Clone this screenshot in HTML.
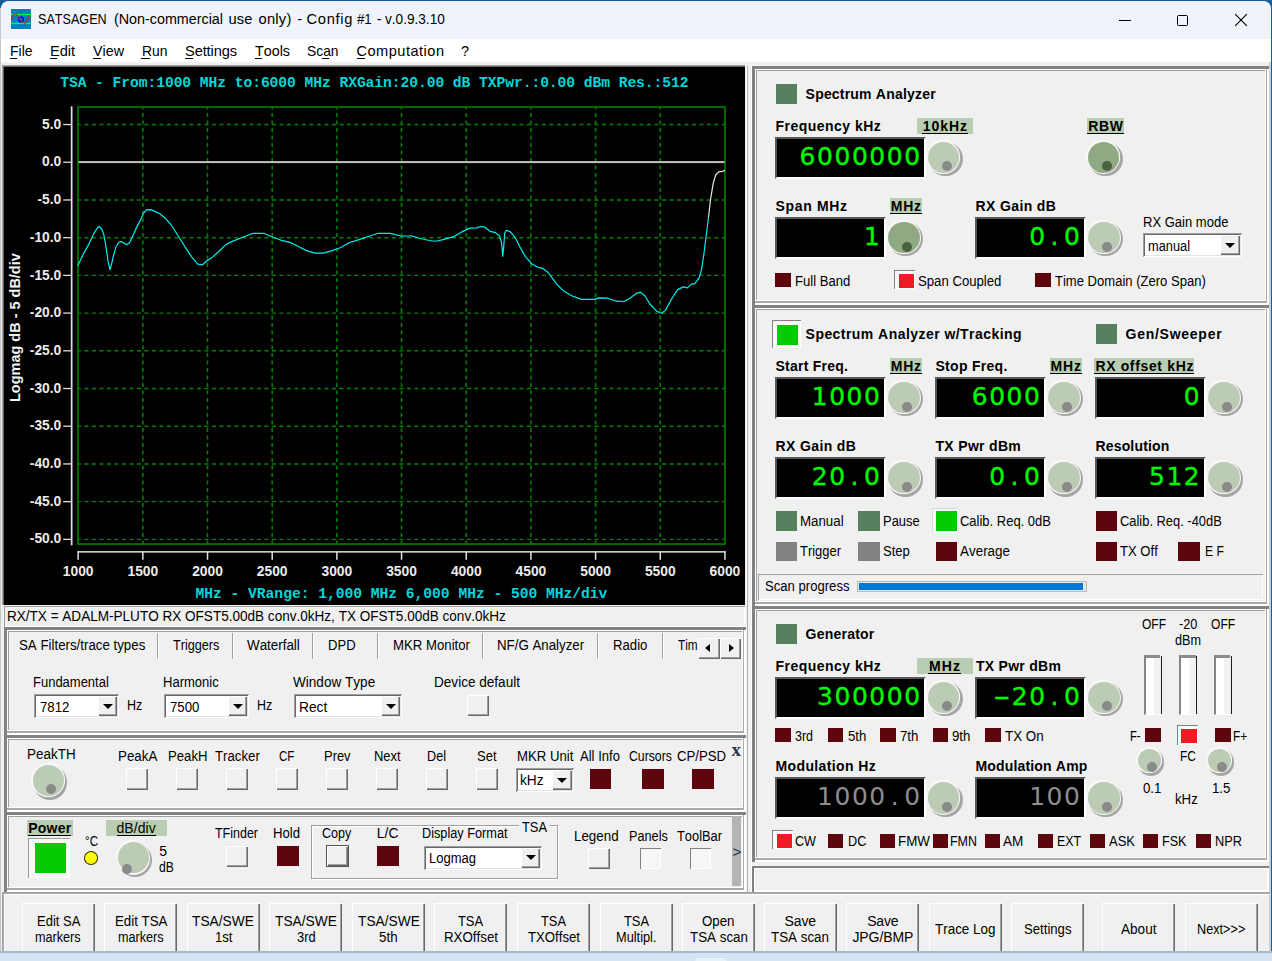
<!DOCTYPE html>
<html><head><meta charset="utf-8"><title>SATSAGEN</title>
<style>

html,body{margin:0;padding:0}
body{width:1272px;height:961px;overflow:hidden;position:relative;background:#1a5c98;font-family:"Liberation Sans",sans-serif;font-size:14px;font-kerning:none;color:#000}
div,span.t,svg{position:absolute;box-sizing:border-box}
span.t{white-space:pre;line-height:1}
.pn{background:#f0f0f0;box-shadow:inset 3px 3px #828282,inset -2px -2px #fff,inset -3px -4px #aaa,inset 4px 4px #fff,inset -4px -5px #fff,inset 5px 5px #a0a0a0}
.sk{background:#f0f0f0;box-shadow:inset 1px 1px #a0a0a0,inset -1px -1px #fff}
.lcd{background:#000;border:2px solid;border-color:#585858 #fff #fff #585858}
.dg{right:2.7px;top:5.6px;height:25px;line-height:25px;font-size:24.9px;font-family:'DejaVu Sans','Liberation Sans',sans-serif;white-space:nowrap;letter-spacing:1.609px;-webkit-text-stroke:0.35px currentColor}
.dg span{display:inline-block;width:17.45px;text-align:center;letter-spacing:0;margin-left:-0.8px;margin-right:0.8px}
.dg span.m{transform:translateY(-0.5px) scaleX(1.9)}
.bt{background:#f0f0f0;box-shadow:inset 1px 1px #fff,inset -1px -1px #696969,inset -2px -2px #a0a0a0}
.cb{background:#fff;box-shadow:inset 1px 1px #a0a0a0,inset -1px -1px #fff,inset 2px 2px #696969,inset -2px -2px #e3e3e3}
.ar{width:0;height:0;border-left:5px solid transparent;border-right:5px solid transparent;border-top:5.5px solid #000}
.dn{background:#f8f8f8;box-shadow:inset 1px 1px #808080,inset -1px -1px #fff}
.c{border-radius:50%}
.hl{background:#b9cdb2}

</style></head>
<body>
<div style="left:0px;top:8px;width:1px;height:944px;background:#c4c8cc"></div>
<div style="left:1px;top:1px;width:1270px;height:951px;background:#f0f0f0;border-radius:8px 8px 0 0"></div>
<div style="left:1px;top:1px;width:1270px;height:38px;background:#eff4fa;border-radius:8px 8px 0 0"></div>
<div style="left:1269px;top:39px;width:2px;height:913px;background:#d2cfcb"></div>
<svg style="left:10px;top:8px" width="22" height="22" viewBox="-1 -1 22 22"><rect x="-1" y="-1" width="22" height="22" fill="#fbfcfe"/><rect width="20" height="20" fill="#0080c0"/><rect y="4.9" width="20" height="1.3" fill="#00f848"/><rect y="13.7" width="20" height="1.4" fill="#00f848"/><circle cx="9.9" cy="10.4" r="2.3" fill="none" stroke="#0010f0" stroke-width="1.7"/><polyline points="0.5,10 2.2,5.8 5.3,5.4 6.9,7.5 9.4,10.5 10.7,12.9 12.6,13 14.3,14.6 15.6,12 16.7,9.7 18,7.9 19.6,9.4" fill="none" stroke="#f01010" stroke-width="1.3" stroke-dasharray="1.6 0.7"/></svg>
<span class="t" style="font-size:14.7px;left:38.1px;top:12.16px;transform-origin:0 0;transform:scaleX(0.8587);">SATSAGEN</span>
<span class="t" style="font-size:14.7px;left:113.5px;top:12.16px;transform-origin:0 0;transform:scaleX(0.9748);">(Non-commercial</span>
<span class="t" style="font-size:14.7px;letter-spacing:0.056px;left:228.6px;top:12.16px;">use</span>
<span class="t" style="font-size:14.7px;letter-spacing:0.214px;left:258.6px;top:12.16px;">only)</span>
<span class="t" style="font-size:14.7px;left:297.2px;top:12.16px;">-</span>
<span class="t" style="font-size:14.7px;letter-spacing:0.666px;left:306.6px;top:12.16px;">Config</span>
<span class="t" style="font-size:14.7px;left:357.3px;top:12.16px;transform-origin:0 0;transform:scaleX(0.8994);">#1</span>
<span class="t" style="font-size:14.7px;left:376.7px;top:12.16px;">-</span>
<span class="t" style="font-size:14.7px;left:385.2px;top:12.16px;transform-origin:0 0;transform:scaleX(0.9269);">v.0.9.3.10</span>
<div style="left:1118.5px;top:19.5px;width:12.5px;height:1.2px;background:#000"></div>
<div style="left:1176.5px;top:14.5px;width:11px;height:11px;border:1.2px solid #000;border-radius:1.5px"></div>
<svg style="left:1234px;top:13px" width="14" height="14" viewBox="0 0 14 14"><path d="M1.2 1.2L12.8 12.8M12.8 1.2L1.2 12.8" stroke="#000" stroke-width="1.15" fill="none"/></svg>
<div style="left:1px;top:39px;width:1270px;height:23px;background:#fff"></div>
<span class="t" style="font-size:14.6px;left:10px;top:43.94px;transform-origin:0 0;transform:scaleX(0.9568);">File</span>
<span class="t" style="font-size:14.6px;letter-spacing:-0.052px;left:50px;top:43.94px;">Edit</span>
<span class="t" style="font-size:14.6px;left:92.5px;top:43.94px;transform-origin:0 0;transform:scaleX(0.9798);">View</span>
<span class="t" style="font-size:14.6px;left:141.5px;top:43.94px;transform-origin:0 0;transform:scaleX(0.9522);">Run</span>
<span class="t" style="font-size:14.6px;letter-spacing:-0.105px;left:185px;top:43.94px;">Settings</span>
<span class="t" style="font-size:14.6px;left:255px;top:43.94px;transform-origin:0 0;transform:scaleX(0.9807);">Tools</span>
<span class="t" style="font-size:14.6px;left:307px;top:43.94px;transform-origin:0 0;transform:scaleX(0.9469);">Scan</span>
<span class="t" style="font-size:14.6px;letter-spacing:0.475px;left:356.5px;top:43.94px;">Computation</span>
<span class="t" style="font-size:14.6px;left:461px;top:43.94px;">?</span>
<div style="left:10px;top:57.6px;width:6.6px;height:1px;background:#000"></div>
<div style="left:50px;top:57.6px;width:6.8px;height:1px;background:#000"></div>
<div style="left:92.5px;top:57.6px;width:8.2px;height:1px;background:#000"></div>
<div style="left:141.4px;top:57.6px;width:8.4px;height:1px;background:#000"></div>
<div style="left:185px;top:57.6px;width:7.6px;height:1px;background:#000"></div>
<div style="left:255px;top:57.6px;width:7.2px;height:1px;background:#000"></div>
<div style="left:321.6px;top:57.6px;width:7px;height:1px;background:#000"></div>
<div style="left:356.6px;top:57.6px;width:8.6px;height:1px;background:#000"></div>
<div style="left:2px;top:65px;width:745px;height:540px;background:#000;box-shadow:inset 1px 1px #a0a0a0,inset 2px 2px #696969"></div>
<div style="left:745px;top:65px;width:7px;height:828px;background:#f0f0f0"></div>
<div style="left:745.5px;top:66px;width:1.5px;height:540px;background:#fff"></div>
<div style="left:747px;top:66px;width:1px;height:826px;background:#b4b4b4"></div>
<div style="left:751px;top:65px;width:1px;height:826px;background:#fff"></div>
<svg style="left:0;top:0" width="1272" height="961" viewBox="0 0 1272 961">
<line x1="76.9" y1="124.55" x2="725" y2="124.55" stroke="#008200" stroke-width="1.4" stroke-dasharray="4.1 3.4"/>
<line x1="76.9" y1="199.97" x2="725" y2="199.97" stroke="#008200" stroke-width="1.4" stroke-dasharray="4.1 3.4"/>
<line x1="76.9" y1="237.68" x2="725" y2="237.68" stroke="#008200" stroke-width="1.4" stroke-dasharray="4.1 3.4"/>
<line x1="76.9" y1="275.39" x2="725" y2="275.39" stroke="#008200" stroke-width="1.4" stroke-dasharray="4.1 3.4"/>
<line x1="76.9" y1="313.10" x2="725" y2="313.10" stroke="#008200" stroke-width="1.4" stroke-dasharray="4.1 3.4"/>
<line x1="76.9" y1="350.81" x2="725" y2="350.81" stroke="#008200" stroke-width="1.4" stroke-dasharray="4.1 3.4"/>
<line x1="76.9" y1="388.52" x2="725" y2="388.52" stroke="#008200" stroke-width="1.4" stroke-dasharray="4.1 3.4"/>
<line x1="76.9" y1="426.23" x2="725" y2="426.23" stroke="#008200" stroke-width="1.4" stroke-dasharray="4.1 3.4"/>
<line x1="76.9" y1="463.94" x2="725" y2="463.94" stroke="#008200" stroke-width="1.4" stroke-dasharray="4.1 3.4"/>
<line x1="76.9" y1="501.65" x2="725" y2="501.65" stroke="#008200" stroke-width="1.4" stroke-dasharray="4.1 3.4"/>
<line x1="76.9" y1="539.36" x2="725" y2="539.36" stroke="#008200" stroke-width="1.4" stroke-dasharray="4.1 3.4"/>
<line x1="142.83" y1="107" x2="142.83" y2="544" stroke="#008200" stroke-width="1.55" stroke-dasharray="4.1 3.4" stroke-dashoffset="1.5"/>
<line x1="207.51" y1="107" x2="207.51" y2="544" stroke="#008200" stroke-width="1.55" stroke-dasharray="4.1 3.4" stroke-dashoffset="1.5"/>
<line x1="272.19" y1="107" x2="272.19" y2="544" stroke="#008200" stroke-width="1.55" stroke-dasharray="4.1 3.4" stroke-dashoffset="1.5"/>
<line x1="336.87" y1="107" x2="336.87" y2="544" stroke="#008200" stroke-width="1.55" stroke-dasharray="4.1 3.4" stroke-dashoffset="1.5"/>
<line x1="401.55" y1="107" x2="401.55" y2="544" stroke="#008200" stroke-width="1.55" stroke-dasharray="4.1 3.4" stroke-dashoffset="1.5"/>
<line x1="466.23" y1="107" x2="466.23" y2="544" stroke="#008200" stroke-width="1.55" stroke-dasharray="4.1 3.4" stroke-dashoffset="1.5"/>
<line x1="530.91" y1="107" x2="530.91" y2="544" stroke="#008200" stroke-width="1.55" stroke-dasharray="4.1 3.4" stroke-dashoffset="1.5"/>
<line x1="595.59" y1="107" x2="595.59" y2="544" stroke="#008200" stroke-width="1.55" stroke-dasharray="4.1 3.4" stroke-dashoffset="1.5"/>
<line x1="660.27" y1="107" x2="660.27" y2="544" stroke="#008200" stroke-width="1.55" stroke-dasharray="4.1 3.4" stroke-dashoffset="1.5"/>
<rect x="77.95" y="107.05" width="647" height="437" fill="none" stroke="#007200" stroke-width="1.8"/>
<rect x="78.5" y="161.1" width="646" height="2" fill="#c4c4c4"/>
<rect x="70.8" y="106.3" width="1.7" height="439" fill="#e0e0e0"/>
<rect x="63.2" y="123.90" width="8" height="1.3" fill="#e0e0e0"/>
<rect x="63.2" y="161.61" width="8" height="1.3" fill="#e0e0e0"/>
<rect x="63.2" y="199.32" width="8" height="1.3" fill="#e0e0e0"/>
<rect x="63.2" y="237.03" width="8" height="1.3" fill="#e0e0e0"/>
<rect x="63.2" y="274.74" width="8" height="1.3" fill="#e0e0e0"/>
<rect x="63.2" y="312.45" width="8" height="1.3" fill="#e0e0e0"/>
<rect x="63.2" y="350.16" width="8" height="1.3" fill="#e0e0e0"/>
<rect x="63.2" y="387.87" width="8" height="1.3" fill="#e0e0e0"/>
<rect x="63.2" y="425.58" width="8" height="1.3" fill="#e0e0e0"/>
<rect x="63.2" y="463.29" width="8" height="1.3" fill="#e0e0e0"/>
<rect x="63.2" y="501.00" width="8" height="1.3" fill="#e0e0e0"/>
<rect x="63.2" y="538.71" width="8" height="1.3" fill="#e0e0e0"/>
<rect x="77.6" y="551.1" width="648" height="1.5" fill="#e0e0e0"/>
<rect x="77.40" y="551.1" width="1.5" height="8.7" fill="#e0e0e0"/>
<rect x="142.08" y="551.1" width="1.5" height="8.7" fill="#e0e0e0"/>
<rect x="206.76" y="551.1" width="1.5" height="8.7" fill="#e0e0e0"/>
<rect x="271.44" y="551.1" width="1.5" height="8.7" fill="#e0e0e0"/>
<rect x="336.12" y="551.1" width="1.5" height="8.7" fill="#e0e0e0"/>
<rect x="400.80" y="551.1" width="1.5" height="8.7" fill="#e0e0e0"/>
<rect x="465.48" y="551.1" width="1.5" height="8.7" fill="#e0e0e0"/>
<rect x="530.16" y="551.1" width="1.5" height="8.7" fill="#e0e0e0"/>
<rect x="594.84" y="551.1" width="1.5" height="8.7" fill="#e0e0e0"/>
<rect x="659.52" y="551.1" width="1.5" height="8.7" fill="#e0e0e0"/>
<rect x="724.20" y="551.1" width="1.5" height="8.7" fill="#e0e0e0"/>
<polyline points="77.8,265.7 83.5,253.6 88.9,244.1 94.3,232.6 97.0,228.5 99.1,226.5 101.8,229.2 103.8,234.6 105.8,245.5 107.9,260.3 109.9,269.5 111.2,265.7 113.3,256.3 116.0,246.8 118.7,242.5 121.4,241.4 124.1,243.4 126.8,244.8 129.5,242.7 132.2,237.3 136.3,227.9 140.3,220.4 143.7,213.0 146.4,209.9 151.1,209.6 155.2,211.6 159.9,213.7 164.7,217.7 171.4,225.2 178.2,236.0 185.0,246.8 191.7,256.9 197.8,264.1 202.5,264.7 207.7,260.3 212.0,257.6 218.8,251.5 225.5,244.8 232.3,241.4 240.8,238.0 253.0,233.3 263.8,233.3 271.5,236.7 281.4,240.3 290.9,242.7 300.3,247.5 307.1,250.9 315.2,253.2 323.3,253.2 331.4,250.9 340.9,247.5 349.0,242.7 359.8,239.4 370.7,235.7 378.1,233.3 390.3,233.3 400.8,236.0 411.6,236.0 422.5,239.0 431.9,241.0 437.3,241.0 444.1,239.4 453.6,236.7 461.7,231.9 469.8,228.1 476.6,227.9 480.6,226.5 484.7,227.2 490.1,231.3 495.5,232.6 499.5,236.0 501.6,242.7 502.7,256.3 503.6,248.2 504.7,233.3 506.3,230.3 510.4,231.9 515.1,237.3 519.8,246.8 525.2,256.3 532.0,264.1 537.4,267.1 542.8,268.4 548.2,272.5 553.6,279.9 556.7,284.1 563.3,290.7 571.6,295.7 581.6,299.4 595.0,299.4 598.3,297.9 607.5,298.2 616.6,301.2 624.1,301.5 629.9,298.2 636.6,293.2 640.8,292.4 644.9,295.7 649.9,304.0 656.6,311.2 661.6,313.2 665.7,309.9 671.6,299.0 677.4,289.9 683.2,286.9 687.4,287.9 691.5,284.1 694.9,283.6 699.0,278.2 701.5,269.9 704.0,253.3 706.5,233.3 708.5,217.5" fill="none" stroke="#00eef0" stroke-width="1.2" stroke-linejoin="round"/>
<polyline points="708.5,217.5 710.7,198.3 713.2,183.3 715.7,175.0 719.0,171.7 723.2,171.3 724.9,170.3" fill="none" stroke="#e6e6e6" stroke-width="1.2" stroke-linejoin="round"/>
</svg>
<span class="t" style="font-size:13.8px;font-weight:bold;color:#ececec;left:42.1125px;top:117.67px;">5.0</span>
<span class="t" style="font-size:13.8px;font-weight:bold;color:#ececec;left:42.1125px;top:155.38px;">0.0</span>
<span class="t" style="font-size:13.8px;font-weight:bold;color:#ececec;left:37.5187px;top:193.09px;">-5.0</span>
<span class="t" style="font-size:13.8px;font-weight:bold;color:#ececec;left:29.8469px;top:230.80px;">-10.0</span>
<span class="t" style="font-size:13.8px;font-weight:bold;color:#ececec;left:29.8469px;top:268.51px;">-15.0</span>
<span class="t" style="font-size:13.8px;font-weight:bold;color:#ececec;left:29.8469px;top:306.22px;">-20.0</span>
<span class="t" style="font-size:13.8px;font-weight:bold;color:#ececec;left:29.8469px;top:343.93px;">-25.0</span>
<span class="t" style="font-size:13.8px;font-weight:bold;color:#ececec;left:29.8469px;top:381.64px;">-30.0</span>
<span class="t" style="font-size:13.8px;font-weight:bold;color:#ececec;left:29.8469px;top:419.35px;">-35.0</span>
<span class="t" style="font-size:13.8px;font-weight:bold;color:#ececec;left:29.8469px;top:457.06px;">-40.0</span>
<span class="t" style="font-size:13.8px;font-weight:bold;color:#ececec;left:29.8469px;top:494.77px;">-45.0</span>
<span class="t" style="font-size:13.8px;font-weight:bold;color:#ececec;left:29.8469px;top:532.48px;">-50.0</span>
<span class="t" style="font-size:13.8px;font-weight:bold;color:#ececec;left:62.7984px;top:565.12px;">1000</span>
<span class="t" style="font-size:13.8px;font-weight:bold;color:#ececec;left:127.478px;top:565.12px;">1500</span>
<span class="t" style="font-size:13.8px;font-weight:bold;color:#ececec;left:192.158px;top:565.12px;">2000</span>
<span class="t" style="font-size:13.8px;font-weight:bold;color:#ececec;left:256.838px;top:565.12px;">2500</span>
<span class="t" style="font-size:13.8px;font-weight:bold;color:#ececec;left:321.518px;top:565.12px;">3000</span>
<span class="t" style="font-size:13.8px;font-weight:bold;color:#ececec;left:386.198px;top:565.12px;">3500</span>
<span class="t" style="font-size:13.8px;font-weight:bold;color:#ececec;left:450.878px;top:565.12px;">4000</span>
<span class="t" style="font-size:13.8px;font-weight:bold;color:#ececec;left:515.558px;top:565.12px;">4500</span>
<span class="t" style="font-size:13.8px;font-weight:bold;color:#ececec;left:580.238px;top:565.12px;">5000</span>
<span class="t" style="font-size:13.8px;font-weight:bold;color:#ececec;left:644.918px;top:565.12px;">5500</span>
<span class="t" style="font-size:13.8px;font-weight:bold;color:#ececec;left:709.598px;top:565.12px;">6000</span>
<span class="t" style="font-family:'Liberation Mono',monospace;font-size:14.67px;font-weight:bold;color:#00d6da;letter-spacing:-0.069px;left:60.2px;top:75.75px;">TSA - From:1000 MHz to:6000 MHz RXGain:20.00 dB TXPwr.:0.00 dBm Res.:512</span>
<span class="t" style="font-family:'Liberation Mono',monospace;font-size:14.67px;font-weight:bold;color:#00d6da;letter-spacing:-0.032px;left:195.5px;top:586.55px;">MHz - VRange: 1,000 MHz 6,000 MHz - 500 MHz/div</span>
<span class="t" style="font-size:14.5px;font-weight:bold;color:#f4f4f4;letter-spacing:-0.012px;left:8.43px;top:401.6px;transform-origin:0 0;transform:rotate(-90deg);">Logmag dB - 5 dB/div</span>
<div class="sk" style="left:4px;top:606px;width:741px;height:21px;"></div>
<span class="t" style="font-size:14px;left:7.2px;top:609.25px;transform-origin:0 0;transform:scaleX(0.9677);">RX/TX = ADALM-PLUTO RX OFST5.00dB conv.0kHz, TX OFST5.00dB conv.0kHz</span>
<div class="pn" style="left:4px;top:627px;width:742px;height:108px;"></div>
<span class="t" style="font-size:14px;left:18.8px;top:637.85px;transform-origin:0 0;transform:scaleX(0.9493);">SA Filters/trace types</span>
<span class="t" style="font-size:14px;left:173.3px;top:637.85px;transform-origin:0 0;transform:scaleX(0.9034);">Triggers</span>
<span class="t" style="font-size:14px;left:247.2px;top:637.85px;transform-origin:0 0;transform:scaleX(0.9559);">Waterfall</span>
<span class="t" style="font-size:14px;left:327.7px;top:637.85px;transform-origin:0 0;transform:scaleX(0.9336);">DPD</span>
<span class="t" style="font-size:14px;left:392.7px;top:637.85px;transform-origin:0 0;transform:scaleX(0.9426);">MKR Monitor</span>
<span class="t" style="font-size:14px;left:497.3px;top:637.85px;transform-origin:0 0;transform:scaleX(0.9487);">NF/G Analyzer</span>
<span class="t" style="font-size:14px;left:612.8px;top:637.85px;transform-origin:0 0;transform:scaleX(0.9401);">Radio</span>
<span class="t" style="font-size:14px;left:678.2px;top:637.85px;transform-origin:0 0;transform:scaleX(0.8445);">Tim</span>
<div style="left:157px;top:633px;width:1px;height:25.5px;background:#a0a0a0"></div>
<div style="left:158px;top:633px;width:1px;height:25.5px;background:#fff"></div>
<div style="left:232px;top:633px;width:1px;height:25.5px;background:#a0a0a0"></div>
<div style="left:233px;top:633px;width:1px;height:25.5px;background:#fff"></div>
<div style="left:312px;top:633px;width:1px;height:25.5px;background:#a0a0a0"></div>
<div style="left:313px;top:633px;width:1px;height:25.5px;background:#fff"></div>
<div style="left:377px;top:633px;width:1px;height:25.5px;background:#a0a0a0"></div>
<div style="left:378px;top:633px;width:1px;height:25.5px;background:#fff"></div>
<div style="left:482px;top:633px;width:1px;height:25.5px;background:#a0a0a0"></div>
<div style="left:483px;top:633px;width:1px;height:25.5px;background:#fff"></div>
<div style="left:597px;top:633px;width:1px;height:25.5px;background:#a0a0a0"></div>
<div style="left:598px;top:633px;width:1px;height:25.5px;background:#fff"></div>
<div style="left:662px;top:633px;width:1px;height:25.5px;background:#a0a0a0"></div>
<div style="left:663px;top:633px;width:1px;height:25.5px;background:#fff"></div>
<div class="bt" style="left:698px;top:638px;width:21.5px;height:20.5px;"></div>
<div class="bt" style="left:719.5px;top:638px;width:21.5px;height:20.5px;"></div>
<div style="left:704.5px;top:643.7px;width:0px;height:0px;border-top:4.5px solid transparent;border-bottom:4.5px solid transparent;border-right:5px solid #000"></div>
<div style="left:728.5px;top:643.7px;width:0px;height:0px;border-top:4.5px solid transparent;border-bottom:4.5px solid transparent;border-left:5px solid #000"></div>
<span class="t" style="font-size:14px;left:33.1px;top:675.35px;transform-origin:0 0;transform:scaleX(0.9276);">Fundamental</span>
<div class="cb" style="left:33.5px;top:694px;width:85.6px;height:24px;"></div>
<div class="bt" style="left:97.6px;top:696px;width:19.5px;height:20px;"></div>
<div class="ar" style="left:102.5px;top:703.6px;width:0px;height:0px;"></div>
<span class="t" style="font-size:14px;left:39.6px;top:700.25px;transform-origin:0 0;transform:scaleX(0.9436);">7812</span>
<span class="t" style="font-size:14px;left:126.8px;top:697.55px;transform-origin:0 0;transform:scaleX(0.8934);">Hz</span>
<span class="t" style="font-size:14px;left:163px;top:675.35px;transform-origin:0 0;transform:scaleX(0.9298);">Harmonic</span>
<div class="cb" style="left:163.5px;top:694px;width:85.6px;height:24px;"></div>
<div class="bt" style="left:227.6px;top:696px;width:19.5px;height:20px;"></div>
<div class="ar" style="left:232.5px;top:703.6px;width:0px;height:0px;"></div>
<span class="t" style="font-size:14px;left:169.6px;top:700.25px;transform-origin:0 0;transform:scaleX(0.9436);">7500</span>
<span class="t" style="font-size:14px;left:257px;top:697.55px;transform-origin:0 0;transform:scaleX(0.8876);">Hz</span>
<span class="t" style="font-size:14px;left:292.5px;top:675.35px;transform-origin:0 0;transform:scaleX(0.9692);">Window Type</span>
<div class="cb" style="left:293.5px;top:694px;width:108.8px;height:24px;"></div>
<div class="bt" style="left:380.8px;top:696px;width:19.5px;height:20px;"></div>
<div class="ar" style="left:385.7px;top:703.6px;width:0px;height:0px;"></div>
<span class="t" style="font-size:14px;left:299px;top:700.25px;transform-origin:0 0;transform:scaleX(0.9827);">Rect</span>
<span class="t" style="font-size:14px;left:434px;top:675.35px;transform-origin:0 0;transform:scaleX(0.9694);">Device default</span>
<div class="bt" style="left:466.5px;top:694.5px;width:22px;height:21.5px;"></div>
<div class="pn" style="left:4px;top:735px;width:742px;height:77px;"></div>
<span class="t" style="font-size:14px;left:26.6px;top:746.75px;transform-origin:0 0;transform:scaleX(0.9609);">PeakTH</span>
<div style="left:32.8px;top:765.2px;width:34.4px;height:34.4px;border-radius:50%;background:#a6a6a6"></div>
<div style="left:30.8px;top:763px;width:33.8px;height:33.8px;border-radius:50%;background:#fafafa"></div>
<div style="left:31.7px;top:763.9px;width:33.4px;height:33.4px;border-radius:50%;background:#f6f6f6"></div>
<div style="left:32.8px;top:765px;width:31.2px;height:31.2px;border-radius:50%;background:#bccbb4"></div>
<div style="left:46.2px;top:783.9px;width:10px;height:10px;border-radius:50%;background:#8a8a8a"></div>
<span class="t" style="font-size:14px;left:118px;top:748.75px;transform-origin:0 0;transform:scaleX(0.9552);">PeakA</span>
<span class="t" style="font-size:14px;left:168px;top:748.75px;transform-origin:0 0;transform:scaleX(0.9398);">PeakH</span>
<span class="t" style="font-size:14px;left:214.6px;top:748.75px;transform-origin:0 0;transform:scaleX(0.9441);">Tracker</span>
<span class="t" style="font-size:14px;left:278.6px;top:748.75px;transform-origin:0 0;transform:scaleX(0.8248);">CF</span>
<span class="t" style="font-size:14px;left:324px;top:748.75px;transform-origin:0 0;transform:scaleX(0.9237);">Prev</span>
<span class="t" style="font-size:14px;left:374.3px;top:748.75px;transform-origin:0 0;transform:scaleX(0.9237);">Next</span>
<span class="t" style="font-size:14px;left:426.8px;top:748.75px;transform-origin:0 0;transform:scaleX(0.9041);">Del</span>
<span class="t" style="font-size:14px;left:476.5px;top:748.75px;transform-origin:0 0;transform:scaleX(0.9279);">Set</span>
<span class="t" style="font-size:14px;left:516.8px;top:748.75px;transform-origin:0 0;transform:scaleX(0.9415);">MKR Unit</span>
<span class="t" style="font-size:14px;left:579.7px;top:748.75px;transform-origin:0 0;transform:scaleX(0.932);">All Info</span>
<span class="t" style="font-size:14px;left:628.8px;top:748.75px;transform-origin:0 0;transform:scaleX(0.8752);">Cursors</span>
<span class="t" style="font-size:14px;left:676.8px;top:748.75px;transform-origin:0 0;transform:scaleX(0.942);">CP/PSD</span>
<div class="bt" style="left:126px;top:768px;width:22.3px;height:21.6px;"></div>
<div class="bt" style="left:176px;top:768px;width:22.3px;height:21.6px;"></div>
<div class="bt" style="left:226px;top:768px;width:22.3px;height:21.6px;"></div>
<div class="bt" style="left:276px;top:768px;width:22.3px;height:21.6px;"></div>
<div class="bt" style="left:326px;top:768px;width:22.3px;height:21.6px;"></div>
<div class="bt" style="left:376px;top:768px;width:22.3px;height:21.6px;"></div>
<div class="bt" style="left:426px;top:768px;width:22.3px;height:21.6px;"></div>
<div class="bt" style="left:476px;top:768px;width:22.3px;height:21.6px;"></div>
<div class="cb" style="left:516.4px;top:768px;width:57.2px;height:23.8px;"></div>
<div class="bt" style="left:552.1px;top:770px;width:19.5px;height:19.8px;"></div>
<div class="ar" style="left:557px;top:777.5px;width:0px;height:0px;"></div>
<span class="t" style="font-size:14px;left:520.4px;top:773.05px;transform-origin:0 0;transform:scaleX(0.9782);">kHz</span>
<div style="left:589.6px;top:768.6px;width:21.6px;height:20.4px;background:#5e060d"></div>
<div style="left:642.1px;top:768.6px;width:21.6px;height:20.4px;background:#5e060d"></div>
<div style="left:692.1px;top:768.6px;width:21.6px;height:20.4px;background:#5e060d"></div>
<span class="t" style="font-family:'Liberation Mono',monospace;font-size:19px;font-weight:bold;color:#2a3254;left:731.6px;top:739.73px;font-family:'Liberation Serif',serif;">x</span>
<div class="pn" style="left:4px;top:812px;width:742px;height:80px;"></div>
<div class="hl" style="left:26.6px;top:820px;width:46.6px;height:16px;"></div>
<span class="t" style="font-size:14px;font-weight:bold;letter-spacing:0.221px;left:28.2px;top:821.05px;">Power</span><div style="left:28.2px;top:834.9px;width:42.9px;height:1px;background:#000"></div>
<div style="left:27.6px;top:838px;width:42px;height:39.5px;background:#f8f8f8;box-shadow:inset 1px 1px #9a9a9a,inset -1px -1px #fff"></div>
<div style="left:34.8px;top:843.3px;width:31px;height:29.4px;background:#02cb02"></div>
<span class="t" style="font-size:14px;left:84.6px;top:833.95px;transform-origin:0 0;transform:scaleX(0.8334);">°C</span>
<div style="left:83.6px;top:850.6px;width:14.6px;height:14.2px;border-radius:50%;background:#303000"></div>
<div style="left:84.8px;top:851.8px;width:12.2px;height:11.8px;border-radius:50%;background:#ffff00"></div>
<div class="hl" style="left:105.9px;top:820px;width:61.3px;height:16px;"></div>
<span class="t" style="font-size:14px;letter-spacing:0.076px;left:116.5px;top:821.05px;">dB/div</span><div style="left:116.5px;top:834.9px;width:39.3px;height:1px;background:#000"></div>
<div style="left:117.7px;top:842.5px;width:34.4px;height:34.4px;border-radius:50%;background:#a6a6a6"></div>
<div style="left:115.7px;top:840.3px;width:33.8px;height:33.8px;border-radius:50%;background:#fafafa"></div>
<div style="left:116.6px;top:841.2px;width:33.4px;height:33.4px;border-radius:50%;background:#f6f6f6"></div>
<div style="left:117.7px;top:842.3px;width:31.2px;height:31.2px;border-radius:50%;background:#bccbb4"></div>
<div style="left:121.7px;top:864px;width:10px;height:10px;border-radius:50%;background:#8a8a8a"></div>
<span class="t" style="font-size:14px;left:159.3px;top:844.15px;">5</span>
<span class="t" style="font-size:14px;left:159px;top:860.15px;transform-origin:0 0;transform:scaleX(0.8642);">dB</span>
<span class="t" style="font-size:14px;left:215px;top:826.25px;transform-origin:0 0;transform:scaleX(0.8915);">TFinder</span>
<div class="bt" style="left:226px;top:845.7px;width:22.3px;height:21.6px;"></div>
<span class="t" style="font-size:14px;left:272.9px;top:826.25px;transform-origin:0 0;transform:scaleX(0.9411);">Hold</span>
<div style="left:277.1px;top:846.3px;width:21.6px;height:20px;background:#5e060d"></div>
<div style="left:311px;top:825px;width:247px;height:53.5px;border:1px solid #a0a0a0;box-shadow:inset 1px 1px #fff,1px 1px #fff"></div>
<span class="t" style="font-size:14px;left:321.5px;top:826.25px;transform-origin:0 0;transform:scaleX(0.8964);">Copy</span>
<div style="left:325.6px;top:845px;width:23px;height:22.4px;background:#f0f0f0;border:1px solid #555;box-shadow:inset 1px 1px #fff,inset -1px -1px #696969,inset -2px -2px #a0a0a0"></div>
<span class="t" style="font-size:14px;letter-spacing:0.052px;left:376.7px;top:826.25px;">L/C</span>
<div style="left:377.1px;top:846.3px;width:21.6px;height:20px;background:#5e060d"></div>
<span class="t" style="font-size:14px;left:421.7px;top:826.25px;transform-origin:0 0;transform:scaleX(0.9082);">Display Format</span>
<div class="cb" style="left:423.8px;top:845.7px;width:118.4px;height:24.2px;"></div>
<div class="bt" style="left:520.7px;top:847.7px;width:19.5px;height:20.2px;"></div>
<div class="ar" style="left:525.6px;top:855.4px;width:0px;height:0px;"></div>
<span class="t" style="font-size:14px;left:428.9px;top:851.25px;transform-origin:0 0;transform:scaleX(0.929);">Logmag</span>
<div style="left:519px;top:819px;width:31px;height:14px;background:#f0f0f0"></div>
<span class="t" style="font-size:14px;left:522px;top:819.65px;transform-origin:0 0;transform:scaleX(0.918);">TSA</span>
<span class="t" style="font-size:14px;left:574px;top:828.85px;transform-origin:0 0;transform:scaleX(0.9546);">Legend</span>
<div class="bt" style="left:587.5px;top:847.7px;width:22.3px;height:21.6px;"></div>
<span class="t" style="font-size:14px;left:629.2px;top:828.85px;transform-origin:0 0;transform:scaleX(0.9063);">Panels</span>
<div style="left:639.6px;top:847.7px;width:21.6px;height:21.6px;background:#f6f6f6;box-shadow:inset 1px 1px #808080,inset -1px -1px #fff"></div>
<span class="t" style="font-size:14px;left:677.2px;top:828.85px;transform-origin:0 0;transform:scaleX(0.9178);">ToolBar</span>
<div style="left:689.7px;top:847.7px;width:21.6px;height:21.6px;background:#f6f6f6;box-shadow:inset 1px 1px #808080,inset -1px -1px #fff"></div>
<div style="left:732px;top:816.4px;width:9px;height:70px;background:#b4b4b4"></div>
<span class="t" style="font-size:15.5px;color:#20305a;left:732.4px;top:844.48px;">&gt;</span>
<div class="pn" style="left:752px;top:66px;width:517px;height:239px;"></div>
<div style="left:776px;top:84px;width:21px;height:20px;background:#56805e"></div>
<span class="t" style="font-size:14px;font-weight:bold;letter-spacing:0.198px;left:805.6px;top:86.95px;">Spectrum Analyzer</span>
<span class="t" style="font-size:14px;font-weight:bold;letter-spacing:0.476px;left:775.5px;top:119.15px;">Frequency kHz</span>
<div class="hl" style="left:917px;top:118px;width:56px;height:16px;"></div>
<span class="t" style="font-size:14px;font-weight:bold;letter-spacing:0.958px;left:922.7px;top:118.95px;">10kHz</span>
<div style="left:921.7px;top:133px;width:46.3px;height:1px;background:#000"></div>
<div class="lcd" style="left:774.8px;top:136.6px;width:151.6px;height:42px;"><div class="dg" style="color:#00fa00">6000000</div></div>
<div style="left:928.2px;top:142px;width:34.4px;height:34.4px;border-radius:50%;background:#a6a6a6"></div>
<div style="left:926.2px;top:139.8px;width:33.8px;height:33.8px;border-radius:50%;background:#fafafa"></div>
<div style="left:927.1px;top:140.7px;width:33.4px;height:33.4px;border-radius:50%;background:#f6f6f6"></div>
<div style="left:928.2px;top:141.8px;width:31.2px;height:31.2px;border-radius:50%;background:#bccbb4"></div>
<div style="left:942px;top:161.4px;width:10px;height:10px;border-radius:50%;background:#8a8a8a"></div>
<div class="hl" style="left:1087px;top:118px;width:37px;height:16px;"></div>
<span class="t" style="font-size:14px;font-weight:bold;letter-spacing:0.681px;left:1088.2px;top:118.95px;">RBW</span>
<div style="left:1087.2px;top:133px;width:36.8px;height:1px;background:#000"></div>
<div style="left:1088.2px;top:141.9px;width:34.4px;height:34.4px;border-radius:50%;background:#a6a6a6"></div>
<div style="left:1086.2px;top:139.7px;width:33.8px;height:33.8px;border-radius:50%;background:#fafafa"></div>
<div style="left:1087.1px;top:140.6px;width:33.4px;height:33.4px;border-radius:50%;background:#f6f6f6"></div>
<div style="left:1088.2px;top:141.7px;width:31.2px;height:31.2px;border-radius:50%;background:#8faa82"></div>
<div style="left:1102px;top:161.3px;width:10px;height:10px;border-radius:50%;background:#4a6242"></div>
<span class="t" style="font-size:14px;font-weight:bold;letter-spacing:0.658px;left:775.5px;top:199.15px;">Span MHz</span>
<div class="hl" style="left:889.6px;top:198px;width:32.2px;height:16px;"></div>
<span class="t" style="font-size:14px;font-weight:bold;letter-spacing:0.809px;left:890.7px;top:198.95px;">MHz</span>
<div style="left:889.7px;top:213px;width:32.4px;height:1px;background:#000"></div>
<div class="lcd" style="left:774.8px;top:216.6px;width:111.4px;height:42px;"><div class="dg" style="color:#00fa00">1</div></div>
<div style="left:888.4px;top:222.1px;width:34.4px;height:34.4px;border-radius:50%;background:#a6a6a6"></div>
<div style="left:886.4px;top:219.9px;width:33.8px;height:33.8px;border-radius:50%;background:#fafafa"></div>
<div style="left:887.3px;top:220.8px;width:33.4px;height:33.4px;border-radius:50%;background:#f6f6f6"></div>
<div style="left:888.4px;top:221.9px;width:31.2px;height:31.2px;border-radius:50%;background:#8faa82"></div>
<div style="left:902.2px;top:241.5px;width:10px;height:10px;border-radius:50%;background:#4a6242"></div>
<span class="t" style="font-size:14px;font-weight:bold;letter-spacing:0.376px;left:975.5px;top:199.15px;">RX Gain dB</span>
<div class="lcd" style="left:974.8px;top:216.6px;width:111.4px;height:42px;"><div class="dg" style="color:#00fa00">0<span>.</span>0</div></div>
<div style="left:1088.4px;top:222.1px;width:34.4px;height:34.4px;border-radius:50%;background:#a6a6a6"></div>
<div style="left:1086.4px;top:219.9px;width:33.8px;height:33.8px;border-radius:50%;background:#fafafa"></div>
<div style="left:1087.3px;top:220.8px;width:33.4px;height:33.4px;border-radius:50%;background:#f6f6f6"></div>
<div style="left:1088.4px;top:221.9px;width:31.2px;height:31.2px;border-radius:50%;background:#bccbb4"></div>
<div style="left:1102.2px;top:241.5px;width:10px;height:10px;border-radius:50%;background:#8a8a8a"></div>
<span class="t" style="font-size:14px;left:1142.9px;top:214.75px;transform-origin:0 0;transform:scaleX(0.93);">RX Gain mode</span>
<div class="cb" style="left:1142.5px;top:233px;width:99px;height:24px;"></div>
<div class="bt" style="left:1220px;top:235px;width:19.5px;height:20px;"></div>
<div class="ar" style="left:1224.9px;top:242.6px;width:0px;height:0px;"></div>
<span class="t" style="font-size:14px;left:1148px;top:239.15px;transform-origin:0 0;transform:scaleX(0.9146);">manual</span>
<div style="left:775px;top:272.8px;width:15.5px;height:14.2px;background:#5e060d"></div>
<span class="t" style="font-size:14px;left:795px;top:274.15px;transform-origin:0 0;transform:scaleX(0.9331);">Full Band</span>
<div class="dn" style="left:894px;top:270.2px;width:21px;height:19px;"></div>
<div style="left:898.8px;top:273.8px;width:15.2px;height:14.2px;background:#ed1c24"></div>
<span class="t" style="font-size:14px;left:917.6px;top:274.15px;transform-origin:0 0;transform:scaleX(0.9397);">Span Coupled</span>
<div style="left:1035px;top:272.8px;width:15.5px;height:14.2px;background:#5e060d"></div>
<span class="t" style="font-size:14px;left:1055.4px;top:274.15px;transform-origin:0 0;transform:scaleX(0.9319);">Time Domain (Zero Span)</span>
<div class="pn" style="left:752px;top:305px;width:517px;height:300.5px;"></div>
<div class="dn" style="left:772px;top:320px;width:28.5px;height:27.5px;"></div>
<div style="left:777.1px;top:325.1px;width:21px;height:19.8px;background:#02cb02"></div>
<span class="t" style="font-size:14px;font-weight:bold;letter-spacing:0.45px;left:805.6px;top:326.95px;">Spectrum Analyzer w/Tracking</span>
<div style="left:1095.9px;top:323.9px;width:21.1px;height:19.8px;background:#56805e"></div>
<span class="t" style="font-size:14px;font-weight:bold;letter-spacing:0.74px;left:1125.5px;top:326.95px;">Gen/Sweeper</span>
<span class="t" style="font-size:14px;font-weight:bold;letter-spacing:0.248px;left:775.5px;top:358.85px;">Start Freq.</span>
<div class="hl" style="left:889.6px;top:358px;width:32.2px;height:16px;"></div>
<span class="t" style="font-size:14px;font-weight:bold;letter-spacing:0.809px;left:890.7px;top:358.95px;">MHz</span>
<div style="left:889.7px;top:373px;width:32.4px;height:1px;background:#000"></div>
<span class="t" style="font-size:14px;font-weight:bold;letter-spacing:0.285px;left:935.5px;top:358.85px;">Stop Freq.</span>
<div class="hl" style="left:1049.5px;top:358px;width:32.2px;height:16px;"></div>
<span class="t" style="font-size:14px;font-weight:bold;letter-spacing:0.809px;left:1050.6px;top:358.95px;">MHz</span>
<div style="left:1049.6px;top:373px;width:32.4px;height:1px;background:#000"></div>
<div class="hl" style="left:1094.4px;top:358px;width:100px;height:16px;"></div>
<span class="t" style="font-size:14px;font-weight:bold;letter-spacing:0.647px;left:1095.4px;top:358.95px;">RX offset kHz</span>
<div style="left:1094.4px;top:373px;width:100px;height:1px;background:#000"></div>
<div class="lcd" style="left:774.8px;top:376.6px;width:111.4px;height:42px;"><div class="dg" style="color:#00fa00">1000</div></div>
<div class="lcd" style="left:934.8px;top:376.6px;width:111.4px;height:42px;"><div class="dg" style="color:#00fa00">6000</div></div>
<div class="lcd" style="left:1094.6px;top:376.6px;width:111.4px;height:42px;"><div class="dg" style="color:#00fa00">0</div></div>
<div style="left:888.4px;top:382.1px;width:34.4px;height:34.4px;border-radius:50%;background:#a6a6a6"></div>
<div style="left:886.4px;top:379.9px;width:33.8px;height:33.8px;border-radius:50%;background:#fafafa"></div>
<div style="left:887.3px;top:380.8px;width:33.4px;height:33.4px;border-radius:50%;background:#f6f6f6"></div>
<div style="left:888.4px;top:381.9px;width:31.2px;height:31.2px;border-radius:50%;background:#bccbb4"></div>
<div style="left:902.2px;top:401.5px;width:10px;height:10px;border-radius:50%;background:#8a8a8a"></div>
<div style="left:1048.4px;top:382.1px;width:34.4px;height:34.4px;border-radius:50%;background:#a6a6a6"></div>
<div style="left:1046.4px;top:379.9px;width:33.8px;height:33.8px;border-radius:50%;background:#fafafa"></div>
<div style="left:1047.3px;top:380.8px;width:33.4px;height:33.4px;border-radius:50%;background:#f6f6f6"></div>
<div style="left:1048.4px;top:381.9px;width:31.2px;height:31.2px;border-radius:50%;background:#bccbb4"></div>
<div style="left:1062.2px;top:401.5px;width:10px;height:10px;border-radius:50%;background:#8a8a8a"></div>
<div style="left:1208.4px;top:382.1px;width:34.4px;height:34.4px;border-radius:50%;background:#a6a6a6"></div>
<div style="left:1206.4px;top:379.9px;width:33.8px;height:33.8px;border-radius:50%;background:#fafafa"></div>
<div style="left:1207.3px;top:380.8px;width:33.4px;height:33.4px;border-radius:50%;background:#f6f6f6"></div>
<div style="left:1208.4px;top:381.9px;width:31.2px;height:31.2px;border-radius:50%;background:#bccbb4"></div>
<div style="left:1222.2px;top:401.5px;width:10px;height:10px;border-radius:50%;background:#8a8a8a"></div>
<span class="t" style="font-size:14px;font-weight:bold;letter-spacing:0.376px;left:775.5px;top:439.15px;">RX Gain dB</span>
<span class="t" style="font-size:14px;font-weight:bold;letter-spacing:0.315px;left:935.5px;top:439.15px;">TX Pwr dBm</span>
<span class="t" style="font-size:14px;font-weight:bold;letter-spacing:0.184px;left:1095.4px;top:439.15px;">Resolution</span>
<div class="lcd" style="left:774.8px;top:456.7px;width:111.4px;height:42px;"><div class="dg" style="color:#00fa00">20<span>.</span>0</div></div>
<div class="lcd" style="left:934.8px;top:456.7px;width:111.4px;height:42px;"><div class="dg" style="color:#00fa00">0<span>.</span>0</div></div>
<div class="lcd" style="left:1094.6px;top:456.7px;width:111.4px;height:42px;"><div class="dg" style="color:#00fa00">512</div></div>
<div style="left:888.4px;top:462.2px;width:34.4px;height:34.4px;border-radius:50%;background:#a6a6a6"></div>
<div style="left:886.4px;top:460px;width:33.8px;height:33.8px;border-radius:50%;background:#fafafa"></div>
<div style="left:887.3px;top:460.9px;width:33.4px;height:33.4px;border-radius:50%;background:#f6f6f6"></div>
<div style="left:888.4px;top:462px;width:31.2px;height:31.2px;border-radius:50%;background:#bccbb4"></div>
<div style="left:902.2px;top:481.6px;width:10px;height:10px;border-radius:50%;background:#8a8a8a"></div>
<div style="left:1048.4px;top:462.2px;width:34.4px;height:34.4px;border-radius:50%;background:#a6a6a6"></div>
<div style="left:1046.4px;top:460px;width:33.8px;height:33.8px;border-radius:50%;background:#fafafa"></div>
<div style="left:1047.3px;top:460.9px;width:33.4px;height:33.4px;border-radius:50%;background:#f6f6f6"></div>
<div style="left:1048.4px;top:462px;width:31.2px;height:31.2px;border-radius:50%;background:#bccbb4"></div>
<div style="left:1062.2px;top:481.6px;width:10px;height:10px;border-radius:50%;background:#8a8a8a"></div>
<div style="left:1208.4px;top:462.2px;width:34.4px;height:34.4px;border-radius:50%;background:#a6a6a6"></div>
<div style="left:1206.4px;top:460px;width:33.8px;height:33.8px;border-radius:50%;background:#fafafa"></div>
<div style="left:1207.3px;top:460.9px;width:33.4px;height:33.4px;border-radius:50%;background:#f6f6f6"></div>
<div style="left:1208.4px;top:462px;width:31.2px;height:31.2px;border-radius:50%;background:#bccbb4"></div>
<div style="left:1222.2px;top:481.6px;width:10px;height:10px;border-radius:50%;background:#8a8a8a"></div>
<div style="left:775.5px;top:511.4px;width:21.5px;height:20px;background:#56805e"></div>
<span class="t" style="font-size:14px;left:800px;top:514.05px;transform-origin:0 0;transform:scaleX(0.9494);">Manual</span>
<div style="left:858px;top:511.4px;width:21.8px;height:20px;background:#56805e"></div>
<span class="t" style="font-size:14px;left:882.9px;top:514.05px;transform-origin:0 0;transform:scaleX(0.9269);">Pause</span>
<div style="left:931.5px;top:507.5px;width:26px;height:25px;background:#f8f8f8;box-shadow:inset 1px 1px #d8d8d8,inset -1px -1px #fff"></div>
<div style="left:935.6px;top:511.4px;width:21.3px;height:20px;background:#02cb02"></div>
<span class="t" style="font-size:14px;left:960px;top:514.05px;transform-origin:0 0;transform:scaleX(0.927);">Calib. Req. 0dB</span>
<div style="left:1095.9px;top:511.4px;width:21.1px;height:20px;background:#5e060d"></div>
<span class="t" style="font-size:14px;left:1120.4px;top:514.05px;transform-origin:0 0;transform:scaleX(0.9211);">Calib. Req. -40dB</span>
<div style="left:775.5px;top:541.6px;width:21.5px;height:19.6px;background:#828282"></div>
<span class="t" style="font-size:14px;left:800px;top:544.15px;transform-origin:0 0;transform:scaleX(0.9243);">Trigger</span>
<div style="left:858px;top:541.6px;width:21.8px;height:19.6px;background:#828282"></div>
<span class="t" style="font-size:14px;left:882.9px;top:544.15px;transform-origin:0 0;transform:scaleX(0.9302);">Step</span>
<div style="left:935.6px;top:541.6px;width:21.3px;height:19.6px;background:#5e060d"></div>
<span class="t" style="font-size:14px;left:959.5px;top:544.15px;transform-origin:0 0;transform:scaleX(0.9587);">Average</span>
<div style="left:1095.9px;top:541.6px;width:21.1px;height:19.6px;background:#5e060d"></div>
<span class="t" style="font-size:14px;left:1120.4px;top:544.15px;transform-origin:0 0;transform:scaleX(0.9344);">TX Off</span>
<div style="left:1178px;top:541.6px;width:21.7px;height:19.6px;background:#5e060d"></div>
<span class="t" style="font-size:14px;left:1205.2px;top:544.15px;transform-origin:0 0;transform:scaleX(0.8723);">E F</span>
<div class="sk" style="left:757.5px;top:574px;width:505.5px;height:25.5px;"></div>
<span class="t" style="font-size:14px;left:765.3px;top:578.85px;transform-origin:0 0;transform:scaleX(0.936);">Scan progress</span>
<div style="left:857.3px;top:580.5px;width:230px;height:11.3px;background:#e6e6e6;border:1px solid #bcbcbc"></div>
<div style="left:859.4px;top:582.5px;width:223.8px;height:7.5px;background:#0078d7"></div>
<div class="pn" style="left:752px;top:606px;width:517px;height:255.5px;"></div>
<div style="left:776px;top:624px;width:21px;height:20px;background:#56805e"></div>
<span class="t" style="font-size:14px;font-weight:bold;letter-spacing:0.222px;left:805.6px;top:626.95px;">Generator</span>
<span class="t" style="font-size:14px;font-weight:bold;letter-spacing:0.476px;left:775.5px;top:659.15px;">Frequency kHz</span>
<div class="hl" style="left:917px;top:658px;width:56px;height:16px;"></div>
<span class="t" style="font-size:14px;font-weight:bold;letter-spacing:1.159px;left:928.9px;top:658.95px;">MHz</span>
<div style="left:927.9px;top:673px;width:33.1px;height:1px;background:#000"></div>
<span class="t" style="font-size:14px;font-weight:bold;letter-spacing:0.292px;left:975.9px;top:659.15px;">TX Pwr dBm</span>
<div class="lcd" style="left:774.8px;top:676.6px;width:151.6px;height:42px;"><div class="dg" style="color:#00fa00">300000</div></div>
<div style="left:928.2px;top:682px;width:34.4px;height:34.4px;border-radius:50%;background:#a6a6a6"></div>
<div style="left:926.2px;top:679.8px;width:33.8px;height:33.8px;border-radius:50%;background:#fafafa"></div>
<div style="left:927.1px;top:680.7px;width:33.4px;height:33.4px;border-radius:50%;background:#f6f6f6"></div>
<div style="left:928.2px;top:681.8px;width:31.2px;height:31.2px;border-radius:50%;background:#bccbb4"></div>
<div style="left:942px;top:701.4px;width:10px;height:10px;border-radius:50%;background:#8a8a8a"></div>
<div class="lcd" style="left:974.8px;top:676.6px;width:111.4px;height:42px;"><div class="dg" style="color:#00fa00"><span class="m">-</span>20<span>.</span>0</div></div>
<div style="left:1088.4px;top:682px;width:34.4px;height:34.4px;border-radius:50%;background:#a6a6a6"></div>
<div style="left:1086.4px;top:679.8px;width:33.8px;height:33.8px;border-radius:50%;background:#fafafa"></div>
<div style="left:1087.3px;top:680.7px;width:33.4px;height:33.4px;border-radius:50%;background:#f6f6f6"></div>
<div style="left:1088.4px;top:681.8px;width:31.2px;height:31.2px;border-radius:50%;background:#bccbb4"></div>
<div style="left:1102.2px;top:701.4px;width:10px;height:10px;border-radius:50%;background:#8a8a8a"></div>
<div style="left:775px;top:727.8px;width:15.5px;height:14.2px;background:#5e060d"></div>
<span class="t" style="font-size:14px;left:795.4px;top:729.15px;transform-origin:0 0;transform:scaleX(0.8896);">3rd</span>
<div style="left:827.7px;top:727.8px;width:15.5px;height:14.2px;background:#5e060d"></div>
<span class="t" style="font-size:14px;left:847.7px;top:729.15px;transform-origin:0 0;transform:scaleX(0.94);">5th</span>
<div style="left:880.2px;top:727.8px;width:15.5px;height:14.2px;background:#5e060d"></div>
<span class="t" style="font-size:14px;left:900.2px;top:729.15px;transform-origin:0 0;transform:scaleX(0.9451);">7th</span>
<div style="left:932.5px;top:727.8px;width:15.5px;height:14.2px;background:#5e060d"></div>
<span class="t" style="font-size:14px;left:952.4px;top:729.15px;transform-origin:0 0;transform:scaleX(0.9451);">9th</span>
<div style="left:985px;top:727.8px;width:15.5px;height:14.2px;background:#5e060d"></div>
<span class="t" style="font-size:14px;left:1005px;top:729.15px;transform-origin:0 0;transform:scaleX(0.9563);">TX On</span>
<span class="t" style="font-size:14px;font-weight:bold;letter-spacing:0.379px;left:775.5px;top:758.95px;">Modulation Hz</span>
<span class="t" style="font-size:14px;font-weight:bold;letter-spacing:0.165px;left:975.5px;top:758.95px;">Modulation Amp</span>
<div class="lcd" style="left:774.8px;top:776.8px;width:151.6px;height:42px;"><div class="dg" style="color:#8e8e8e;-webkit-text-stroke:0">1000<span>.</span>0</div></div>
<div style="left:928.2px;top:782.6px;width:34.4px;height:34.4px;border-radius:50%;background:#a6a6a6"></div>
<div style="left:926.2px;top:780.4px;width:33.8px;height:33.8px;border-radius:50%;background:#fafafa"></div>
<div style="left:927.1px;top:781.3px;width:33.4px;height:33.4px;border-radius:50%;background:#f6f6f6"></div>
<div style="left:928.2px;top:782.4px;width:31.2px;height:31.2px;border-radius:50%;background:#bccbb4"></div>
<div style="left:942px;top:802px;width:10px;height:10px;border-radius:50%;background:#8a8a8a"></div>
<div class="lcd" style="left:974.8px;top:776.8px;width:111.4px;height:42px;"><div class="dg" style="color:#8e8e8e;-webkit-text-stroke:0">100</div></div>
<div style="left:1088.4px;top:782.6px;width:34.4px;height:34.4px;border-radius:50%;background:#a6a6a6"></div>
<div style="left:1086.4px;top:780.4px;width:33.8px;height:33.8px;border-radius:50%;background:#fafafa"></div>
<div style="left:1087.3px;top:781.3px;width:33.4px;height:33.4px;border-radius:50%;background:#f6f6f6"></div>
<div style="left:1088.4px;top:782.4px;width:31.2px;height:31.2px;border-radius:50%;background:#bccbb4"></div>
<div style="left:1102.2px;top:802px;width:10px;height:10px;border-radius:50%;background:#8a8a8a"></div>
<div class="dn" style="left:772.2px;top:830.2px;width:20.5px;height:19px;"></div>
<div style="left:776.6px;top:833.9px;width:15.3px;height:14px;background:#ed1c24"></div>
<span class="t" style="font-size:14px;left:795.4px;top:833.95px;transform-origin:0 0;transform:scaleX(0.9002);">CW</span>
<div style="left:827.7px;top:833.9px;width:15.3px;height:14px;background:#5e060d"></div>
<span class="t" style="font-size:14px;left:847.7px;top:833.95px;transform-origin:0 0;transform:scaleX(0.9044);">DC</span>
<div style="left:880.2px;top:833.9px;width:15.3px;height:14px;background:#5e060d"></div>
<span class="t" style="font-size:14px;left:897.6px;top:833.95px;transform-origin:0 0;transform:scaleX(0.954);">FMW</span>
<div style="left:932.5px;top:833.9px;width:15.3px;height:14px;background:#5e060d"></div>
<span class="t" style="font-size:14px;left:950.3px;top:833.95px;transform-origin:0 0;transform:scaleX(0.8903);">FMN</span>
<div style="left:985px;top:833.9px;width:15.3px;height:14px;background:#5e060d"></div>
<span class="t" style="font-size:14px;left:1003px;top:833.95px;transform-origin:0 0;transform:scaleX(0.9667);">AM</span>
<div style="left:1037.6px;top:833.9px;width:15.3px;height:14px;background:#5e060d"></div>
<span class="t" style="font-size:14px;left:1057.4px;top:833.95px;transform-origin:0 0;transform:scaleX(0.8849);">EXT</span>
<div style="left:1090px;top:833.9px;width:15.3px;height:14px;background:#5e060d"></div>
<span class="t" style="font-size:14px;left:1109px;top:833.95px;transform-origin:0 0;transform:scaleX(0.9281);">ASK</span>
<div style="left:1142.9px;top:833.9px;width:15.3px;height:14px;background:#5e060d"></div>
<span class="t" style="font-size:14px;left:1162.3px;top:833.95px;transform-origin:0 0;transform:scaleX(0.8996);">FSK</span>
<div style="left:1195.6px;top:833.9px;width:15.3px;height:14px;background:#5e060d"></div>
<span class="t" style="font-size:14px;left:1215px;top:833.95px;transform-origin:0 0;transform:scaleX(0.9133);">NPR</span>
<span class="t" style="font-size:14px;left:1141.8px;top:616.75px;transform-origin:0 0;transform:scaleX(0.8571);">OFF</span>
<span class="t" style="font-size:14px;left:1178.6px;top:616.75px;transform-origin:0 0;transform:scaleX(0.9093);">-20</span>
<span class="t" style="font-size:14px;left:1175px;top:633.15px;transform-origin:0 0;transform:scaleX(0.9029);">dBm</span>
<span class="t" style="font-size:14px;left:1211.3px;top:616.75px;transform-origin:0 0;transform:scaleX(0.8643);">OFF</span>
<div style="left:1144px;top:654.6px;width:16.4px;height:60px;background:linear-gradient(90deg,#fff 0,#fff 55%,#f2f2f2 60%,#f2f2f2 100%);border-left:2.6px solid #858585;border-top:3px solid #8c8c8c;border-bottom:1px solid #fff"></div>
<div style="left:1160.6px;top:656px;width:1.4px;height:57.5px;background:#1c1c1c"></div>
<div style="left:1179.3px;top:654.6px;width:16.4px;height:60px;background:linear-gradient(90deg,#fff 0,#fff 55%,#f2f2f2 60%,#f2f2f2 100%);border-left:2.6px solid #858585;border-top:3px solid #8c8c8c;border-bottom:1px solid #fff"></div>
<div style="left:1195.9px;top:656px;width:1.4px;height:57.5px;background:#1c1c1c"></div>
<div style="left:1214px;top:654.6px;width:16.4px;height:60px;background:linear-gradient(90deg,#fff 0,#fff 55%,#f2f2f2 60%,#f2f2f2 100%);border-left:2.6px solid #858585;border-top:3px solid #8c8c8c;border-bottom:1px solid #fff"></div>
<div style="left:1230.6px;top:656px;width:1.4px;height:57.5px;background:#1c1c1c"></div>
<span class="t" style="font-size:14px;left:1130.2px;top:729.15px;transform-origin:0 0;transform:scaleX(0.8019);">F-</span>
<div style="left:1144.8px;top:727.9px;width:15.8px;height:13.8px;background:#5e060d"></div>
<div class="dn" style="left:1177px;top:725.3px;width:21px;height:19.4px;"></div>
<div style="left:1181.3px;top:729px;width:15.9px;height:14px;background:#ed1c24"></div>
<div style="left:1215px;top:727.9px;width:15.9px;height:13.8px;background:#5e060d"></div>
<span class="t" style="font-size:14px;left:1232.8px;top:729.15px;transform-origin:0 0;transform:scaleX(0.8486);">F+</span>
<span class="t" style="font-size:14px;left:1180px;top:749.15px;transform-origin:0 0;transform:scaleX(0.8569);">FC</span>
<div style="left:1138.1px;top:749.3px;width:26.4px;height:26.4px;border-radius:50%;background:#a6a6a6"></div>
<div style="left:1136.1px;top:747.1px;width:25.8px;height:25.8px;border-radius:50%;background:#fafafa"></div>
<div style="left:1137px;top:748px;width:25.4px;height:25.4px;border-radius:50%;background:#f6f6f6"></div>
<div style="left:1138.1px;top:749.1px;width:23.2px;height:23.2px;border-radius:50%;background:#bccbb4"></div>
<div style="left:1147px;top:762.3px;width:10px;height:10px;border-radius:50%;background:#8a8a8a"></div>
<div style="left:1208px;top:749.3px;width:26.4px;height:26.4px;border-radius:50%;background:#a6a6a6"></div>
<div style="left:1206px;top:747.1px;width:25.8px;height:25.8px;border-radius:50%;background:#fafafa"></div>
<div style="left:1206.9px;top:748px;width:25.4px;height:25.4px;border-radius:50%;background:#f6f6f6"></div>
<div style="left:1208px;top:749.1px;width:23.2px;height:23.2px;border-radius:50%;background:#bccbb4"></div>
<div style="left:1217px;top:762.3px;width:10px;height:10px;border-radius:50%;background:#8a8a8a"></div>
<span class="t" style="font-size:14px;left:1142.9px;top:781.35px;transform-origin:0 0;transform:scaleX(0.9451);">0.1</span>
<span class="t" style="font-size:14px;left:1175.2px;top:791.55px;transform-origin:0 0;transform:scaleX(0.9451);">kHz</span>
<span class="t" style="font-size:14px;left:1212.4px;top:781.35px;transform-origin:0 0;transform:scaleX(0.9451);">1.5</span>
<div style="left:752px;top:866px;width:517px;height:25.5px;background:#f0f0f0;box-shadow:inset 2px 2px #828282,inset -2px -2px #fff,inset 3px 3px #fff"></div>
<div style="left:2px;top:892px;width:1268px;height:1.6px;background:#a6a6a6"></div>
<div style="left:3.5px;top:893.6px;width:1266px;height:1px;background:#fff"></div>
<div style="left:2px;top:892px;width:1.5px;height:60px;background:#a6a6a6"></div>
<div style="left:3.5px;top:894px;width:1px;height:58px;background:#fff"></div>
<div class="bt" style="left:21.5px;top:902.5px;width:73px;height:51.5px;"></div>
<span class="t" style="font-size:14px;left:36.55px;top:913.55px;transform-origin:0 0;transform:scaleX(0.9271);">Edit SA</span>
<span class="t" style="font-size:14px;left:35.4px;top:929.55px;transform-origin:0 0;transform:scaleX(0.9019);">markers</span>
<div class="bt" style="left:104.3px;top:902.5px;width:73px;height:51.5px;"></div>
<span class="t" style="font-size:14px;left:114.75px;top:913.55px;transform-origin:0 0;transform:scaleX(0.9502);">Edit TSA</span>
<span class="t" style="font-size:14px;left:118.2px;top:929.55px;transform-origin:0 0;transform:scaleX(0.9019);">markers</span>
<div class="bt" style="left:186.6px;top:902.5px;width:73px;height:51.5px;"></div>
<span class="t" style="font-size:14px;left:192.4px;top:913.55px;transform-origin:0 0;transform:scaleX(0.9807);">TSA/SWE</span>
<span class="t" style="font-size:14px;left:214.55px;top:929.55px;transform-origin:0 0;transform:scaleX(0.9365);">1st</span>
<div class="bt" style="left:269.3px;top:902.5px;width:73px;height:51.5px;"></div>
<span class="t" style="font-size:14px;left:275.1px;top:913.55px;transform-origin:0 0;transform:scaleX(0.9807);">TSA/SWE</span>
<span class="t" style="font-size:14px;left:296.7px;top:929.55px;transform-origin:0 0;transform:scaleX(0.9192);">3rd</span>
<div class="bt" style="left:351.7px;top:902.5px;width:73px;height:51.5px;"></div>
<span class="t" style="font-size:14px;left:357.5px;top:913.55px;transform-origin:0 0;transform:scaleX(0.9807);">TSA/SWE</span>
<span class="t" style="font-size:14px;left:379.1px;top:929.55px;transform-origin:0 0;transform:scaleX(0.9554);">5th</span>
<div class="bt" style="left:434.2px;top:902.5px;width:73px;height:51.5px;"></div>
<span class="t" style="font-size:14px;left:458.4px;top:913.55px;transform-origin:0 0;transform:scaleX(0.918);">TSA</span>
<span class="t" style="font-size:14px;left:443.9px;top:929.55px;transform-origin:0 0;transform:scaleX(0.9508);">RXOffset</span>
<div class="bt" style="left:517.2px;top:902.5px;width:73px;height:51.5px;"></div>
<span class="t" style="font-size:14px;left:541.4px;top:913.55px;transform-origin:0 0;transform:scaleX(0.918);">TSA</span>
<span class="t" style="font-size:14px;left:527.9px;top:929.55px;transform-origin:0 0;transform:scaleX(0.9414);">TXOffset</span>
<div class="bt" style="left:599.6px;top:902.5px;width:73px;height:51.5px;"></div>
<span class="t" style="font-size:14px;left:623.8px;top:913.55px;transform-origin:0 0;transform:scaleX(0.918);">TSA</span>
<span class="t" style="font-size:14px;left:616.05px;top:929.55px;transform-origin:0 0;transform:scaleX(0.913);">Multipl.</span>
<div class="bt" style="left:682px;top:902.5px;width:73px;height:51.5px;"></div>
<span class="t" style="font-size:14px;left:702.45px;top:913.55px;transform-origin:0 0;transform:scaleX(0.9489);">Open</span>
<span class="t" style="font-size:14px;left:689.7px;top:929.55px;transform-origin:0 0;transform:scaleX(0.9555);">TSA scan</span>
<div class="bt" style="left:763.6px;top:902.5px;width:73px;height:51.5px;"></div>
<span class="t" style="font-size:14px;letter-spacing:-0.141px;left:784.55px;top:913.55px;">Save</span>
<span class="t" style="font-size:14px;left:771.3px;top:929.55px;transform-origin:0 0;transform:scaleX(0.9555);">TSA scan</span>
<div class="bt" style="left:846.2px;top:902.5px;width:73px;height:51.5px;"></div>
<span class="t" style="font-size:14px;letter-spacing:-0.141px;left:867.15px;top:913.55px;">Save</span>
<span class="t" style="font-size:14px;letter-spacing:-0.078px;left:852.4px;top:929.55px;">JPG/BMP</span>
<div class="bt" style="left:928.9px;top:902.5px;width:73px;height:51.5px;"></div>
<span class="t" style="font-size:14px;left:935.35px;top:921.75px;transform-origin:0 0;transform:scaleX(0.9596);">Trace Log</span>
<div class="bt" style="left:1011.3px;top:902.5px;width:73px;height:51.5px;"></div>
<span class="t" style="font-size:14px;left:1024.25px;top:921.75px;transform-origin:0 0;transform:scaleX(0.9389);">Settings</span>
<div class="bt" style="left:1102.4px;top:902.5px;width:73px;height:51.5px;"></div>
<span class="t" style="font-size:14px;left:1121.35px;top:921.75px;transform-origin:0 0;transform:scaleX(0.9701);">About</span>
<div class="bt" style="left:1184.9px;top:902.5px;width:73px;height:51.5px;"></div>
<span class="t" style="font-size:14px;left:1197.45px;top:921.75px;transform-origin:0 0;transform:scaleX(0.9057);">Next&gt;&gt;&gt;</span>
<div style="left:0px;top:951.6px;width:1272px;height:9.4px;background:#d3e5f4"></div>
<div style="left:0px;top:951.2px;width:1272px;height:1.4px;background:#a8b8c8"></div>
<div style="left:695px;top:958.3px;width:32px;height:8px;background:#e6f0f9;border-radius:4px"></div>
</body></html>
